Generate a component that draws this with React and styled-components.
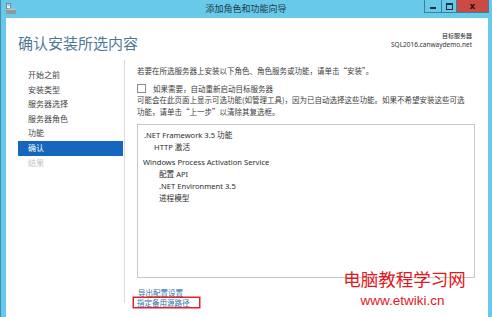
import React from "react";
import styled, { createGlobalStyle } from "styled-components";

const Global = createGlobalStyle`
  html, body { margin: 0; padding: 0; background: #69c9e8; }
  body { font-family: "Noto Sans", "Noto Sans CJK SC", sans-serif; }
`;

const CJK = `"Noto Sans CJK SC", "Noto Sans", sans-serif`;
const LATIN = `"Noto Sans", "Noto Sans CJK SC", sans-serif`;

const Window = styled.div`
  width: 492px;
  height: 317px;
  display: flex;
  flex-direction: column;
  background: #69c9e8;
  box-shadow: inset 1px 0 0 #3f8fb5;
  overflow: hidden;
  position: relative;
`;

const TitleBar = styled.div`
  height: 18px;
  flex: none;
  display: flex;
  align-items: center;
  position: relative;
`;

const AppIcon = styled.svg`
  margin-left: 5px;
  width: 12px;
  height: 12px;
`;

const Title = styled.div`
  position: absolute;
  left: 0;
  right: 0;
  top: 0;
  height: 18px;
  line-height: 18px;
  text-align: center;
  font-family: ${CJK};
  font-size: 9px;
  color: #1b3a4a;
  pointer-events: none;
`;

const Controls = styled.div`
  margin-left: auto;
  margin-right: 3px;
  align-self: flex-start;
  display: flex;
  height: 13px;
`;

const CtrlButton = styled.div`
  width: ${(p) => p.$w}px;
  height: 12px;
  border: 1px solid #3a7f9f;
  border-top: none;
  margin-left: -1px;
  background: ${(p) => (p.$close ? "#c94b43" : "#69c9e8")};
  display: flex;
  align-items: center;
  justify-content: center;
`;

const MinGlyph = styled.div`
  width: 6px;
  height: 2px;
  background: #1d2f3a;
  margin-top: 4px;
`;

const MaxGlyph = styled.div`
  width: 5px;
  height: 4px;
  border: 1px solid #1d2f3a;
  border-top-width: 2px;
`;

const CloseGlyph = styled.span`
  font-family: "DejaVu Sans", sans-serif;
  font-weight: bold;
  font-size: 9px;
  line-height: 1;
  color: #3b0d0b;
`;

const Client = styled.div`
  flex: 1;
  margin: 0 4px 0 6px;
  background: #ffffff;
  display: flex;
  flex-direction: column;
  min-height: 0;
`;

const Header = styled.div`
  height: 42px;
  flex: none;
  display: flex;
  justify-content: space-between;
  align-items: flex-start;
  padding: 0 12px 0 12px;
`;

const Heading = styled.h1`
  margin: 16px 0 0 0;
  font-family: ${CJK};
  font-weight: 400;
  font-size: 15px;
  line-height: 18px;
  color: #4f7793;
`;

const Target = styled.div`
  margin-top: 13px;
  margin-right: 4px;
  text-align: right;
  color: #222;
`;

const TargetLabel = styled.div`
  font-family: ${CJK};
  font-size: 6px;
  line-height: 9px;
`;

const TargetName = styled.div`
  font-family: ${LATIN};
  font-size: 6.5px;
  line-height: 10px;
  color: #333;
`;

const Body = styled.div`
  flex: 1;
  display: flex;
  min-height: 0;
`;

const Nav = styled.ul`
  list-style: none;
  margin: 0 0 14px 0;
  padding: 8px 1px 0 12px;
  width: 105px;
  flex: none;
  border-right: 1px solid #dcdcdc;
`;

const NavItem = styled.li`
  height: 14.6px;
  line-height: 14.6px;
  padding-left: 10px;
  font-family: ${CJK};
  font-size: 8px;
  color: ${(p) => (p.$active ? "#ffffff" : p.$disabled ? "#c4c4c4" : "#444444")};
  background: ${(p) => (p.$active ? "#1467bd" : "transparent")};
`;

const Content = styled.div`
  flex: 1;
  padding: 5px 0 0 12px;
  display: flex;
  flex-direction: column;
  color: #3c3c3c;
`;

const Text = styled.p`
  margin: 0;
  font-family: ${CJK};
  font-size: 7.5px;
  line-height: 12px;
  width: ${(p) => (p.$w ? p.$w + "px" : "auto")};
`;

const CheckRow = styled.label`
  display: flex;
  align-items: center;
  height: 12px;
  margin-top: 5px;
  font-family: ${CJK};
  font-size: 7.5px;
`;

const CheckBox = styled.span`
  width: 7px;
  height: 7px;
  border: 1px solid #8a8a8a;
  background: #fff;
  margin-right: 7px;
`;

const ListBox = styled.div`
  margin-top: 6px;
  width: 336px;
  height: 148px;
  border: 1px solid #c8c8c8;
  padding-top: 4px;
  box-sizing: content-box;
`;

const Group = styled.div`
  & + & {
    margin-top: 3px;
  }
`;

const ListItem = styled.div`
  height: 12px;
  line-height: 12px;
  padding-left: ${(p) => p.$indent}px;
  font-family: ${LATIN};
  font-size: 7.6px;
  color: #2c2c2c;
`;

const Links = styled.div`
  margin-top: 10px;
  display: flex;
  flex-direction: column;
  align-items: flex-start;
`;

const Link = styled.a`
  font-family: ${CJK};
  font-size: 7.5px;
  line-height: 9px;
  color: #2d6fa3;
  text-decoration: none;
  box-sizing: border-box;
  padding: 0 ${(p) => (p.$boxed ? 3 : 0)}px;
  margin-left: ${(p) => (p.$boxed ? -4 : 1)}px;
  border: ${(p) => (p.$boxed ? "1px solid #e0202a" : "none")};
  box-shadow: ${(p) => (p.$boxed ? "0 0 0 0.5px #e0202a" : "none")};
  width: ${(p) => (p.$boxed ? "67px" : "auto")};
`;

const Watermark = styled.div`
  position: absolute;
  left: 342px;
  top: 268px;
  width: 125px;
  display: flex;
  flex-direction: column;
  align-items: center;
  color: #e3171d;
  pointer-events: none;
`;

const WmTitle = styled.div`
  font-family: ${CJK};
  font-size: 17.5px;
  line-height: 22px;
  white-space: nowrap;
`;

const WmUrl = styled.div`
  font-family: "Liberation Sans", Arial, sans-serif;
  font-size: 13.5px;
  line-height: 16px;
  margin-top: 3px;
  margin-left: -4px;
`;

const navItems = ["开始之前", "安装类型", "服务器选择", "服务器角色", "功能", "确认", "结果"];

const groups = [
  { head: ".NET Framework 3.5 功能", headIndent: 6, items: [{ t: "HTTP 激活", i: 16 }] },
  {
    head: "Windows Process Activation Service",
    headIndent: 5,
    items: [
      { t: "配置 API", i: 21 },
      { t: ".NET Environment 3.5", i: 21 },
      { t: "进程模型", i: 21 },
    ],
  },
];

export default function App() {
  return (
    <>
      <Global />
      <Window>
        <TitleBar>
          <AppIcon viewBox="0 0 12 12">
            <rect x="1.5" y="0.5" width="4" height="5" fill="#e8f6fb" stroke="#5d7d8c" strokeWidth="0.8" />
            <rect x="2.5" y="1.5" width="2" height="1" fill="#5d7d8c" />
            <path d="M1 7 L3 5.5 L10 5.5 L11 7 Z" fill="#b9c3c8" />
            <rect x="1" y="7" width="10" height="4" fill="#8e9aa0" />
          </AppIcon>
          <Title>添加角色和功能向导</Title>
          <Controls>
            <CtrlButton $w={16}>
              <MinGlyph />
            </CtrlButton>
            <CtrlButton $w={14}>
              <MaxGlyph />
            </CtrlButton>
            <CtrlButton $w={31} $close>
              <CloseGlyph>x</CloseGlyph>
            </CtrlButton>
          </Controls>
        </TitleBar>
        <Client>
          <Header>
            <Heading>确认安装所选内容</Heading>
            <Target>
              <TargetLabel>目标服务器</TargetLabel>
              <TargetName>SQL2016.canwaydemo.net</TargetName>
            </Target>
          </Header>
          <Body>
            <Nav>
              {navItems.map((n) => (
                <NavItem key={n} $active={n === "确认"} $disabled={n === "结果"}>
                  {n}
                </NavItem>
              ))}
            </Nav>
            <Content>
              <Text>若要在所选服务器上安装以下角色、角色服务或功能，请单击“安装”。</Text>
              <CheckRow>
                <CheckBox />
                如果需要，自动重新启动目标服务器
              </CheckRow>
              <Text $w={331}>
                可能会在此页面上显示可选功能(如管理工具)，因为已自动选择这些功能。如果不希望安装这些可选功能，请单击“上一步”以清除其复选框。
              </Text>
              <ListBox>
                {groups.map((g) => (
                  <Group key={g.head}>
                    <ListItem $indent={g.headIndent}>{g.head}</ListItem>
                    {g.items.map((it) => (
                      <ListItem key={it.t} $indent={it.i}>
                        {it.t}
                      </ListItem>
                    ))}
                  </Group>
                ))}
              </ListBox>
              <Links>
                <Link href="#">导出配置设置</Link>
                <Link href="#" $boxed>
                  指定备用源路径
                </Link>
              </Links>
            </Content>
          </Body>
        </Client>
        <Watermark>
          <WmTitle>电脑教程学习网</WmTitle>
          <WmUrl>www.etwiki.cn</WmUrl>
        </Watermark>
      </Window>
    </>
  );
}
